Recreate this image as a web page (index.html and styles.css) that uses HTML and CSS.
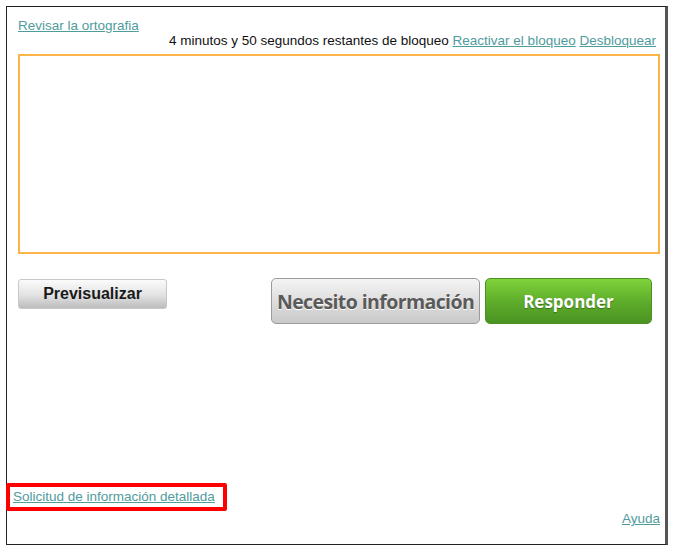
FILE: index.html
```html
<!doctype html>
<html lang="es">
  <head>
    <meta charset="UTF-8" />
    <title>Responder</title>
    <link rel="stylesheet" href="styles.css">
  </head>
  <body>
    <div class="frame">
      <div class="top">
        <a href="#" class="link">Revisar la ortografia</a>
      </div>
      <div class="lock-row">
        4 minutos y 50 segundos restantes de bloqueo
        <a href="#" class="link">Reactivar el bloqueo</a>
        <a href="#" class="link">Desbloquear</a>
      </div>
      <textarea class="reply-box" autofocus></textarea>

      <div class="actions">
        <button class="preview-button">Previsualizar</button>
        <div class="main-buttons">
          <button class="info-button">Necesito información</button>
          <button class="reply-button">Responder</button>
        </div>
      </div>

      <div class="bottom">
        <div class="highlight">
          <a href="#" class="link">Solicitud de información detallada</a>
        </div>
        <div class="help-row">
          <a href="#" class="link">Ayuda</a>
        </div>
      </div>
    </div>
  </body>
</html>
```

FILE: styles.css
```css
body {
  margin: 0;
  font-family: "Liberation Sans", Arial, sans-serif;
  font-size: 13.5px;
  color: #111;
  background: #fff;
}
.frame {
  margin: 6px 0 0 6px;
  width: 658px;
  height: 537px;
  border: 1px solid #222;
  border-right: 3px solid #555;
  position: relative;
}
.link {
  color: #4f9c9c;
  text-decoration: underline;
}
.top {
  padding: 11px 0 0 11px;
  height: 16px;
  line-height: 16px;
}
.lock-row {
  text-align: right;
  padding-right: 9px;
  height: 16px;
  line-height: 16px;
  margin-top: -1px;
}
.reply-box {
  display: block;
  margin: 5px 0 0 11px;
  width: 642px;
  height: 200px;
  box-sizing: border-box;
  border: 2px solid #fbb44a;
  outline: none;
  resize: none;
  padding: 2px;
  font-family: "Liberation Sans", Arial, sans-serif;
  font-size: 13px;
}
.actions {
  display: flex;
  justify-content: space-between;
  align-items: flex-start;
  margin: 24px 0 0 11px;
  padding-right: 13px;
}
.preview-button {
  width: 149px;
  height: 30px;
  margin-top: 1px;
  border: 1px solid #c8c8c8;
  border-radius: 3px;
  background: linear-gradient(#fbfbfb, #e2e2e2 55%, #bcbcbc);
  font-family: "Liberation Sans", Arial, sans-serif;
  font-weight: bold;
  font-size: 16px;
  color: #1a1a1a;
  cursor: pointer;
}
.main-buttons {
  display: flex;
  gap: 5px;
}
.info-button {
  width: 209px;
  height: 46px;
  padding: 0;
  border: 1px solid #9a9a9a;
  border-radius: 5px;
  background: linear-gradient(#f4f4f4, #dedede 50%, #c9c9c9);
  font-family: "Open Sans", sans-serif;
  font-weight: bold;
  font-size: 19.5px;
  letter-spacing: -0.6px;
  color: #5a5a5a;
  text-shadow: 0 1px 0 #fff;
  cursor: pointer;
}
.reply-button {
  width: 167px;
  height: 46px;
  border: 1px solid #4d8f22;
  border-radius: 5px;
  background: linear-gradient(#7fd33a, #5fae2c 50%, #4a9322);
  font-family: "Open Sans", sans-serif;
  font-weight: bold;
  font-size: 17px;
  color: #fff;
  text-shadow: 0 1px 1px #3c6e1c;
  cursor: pointer;
}
.bottom {
  position: absolute;
  left: 0;
  right: 0;
  bottom: 0;
}
.highlight {
  display: inline-block;
  border: 4px solid #f00;
  border-radius: 2px;
  padding: 2px 8px 2px 3px;
  margin-left: -1px;
  line-height: 16px;
}
.help-row {
  text-align: right;
  padding: 0 5px 17px 0;
  line-height: 16px;
}
```
